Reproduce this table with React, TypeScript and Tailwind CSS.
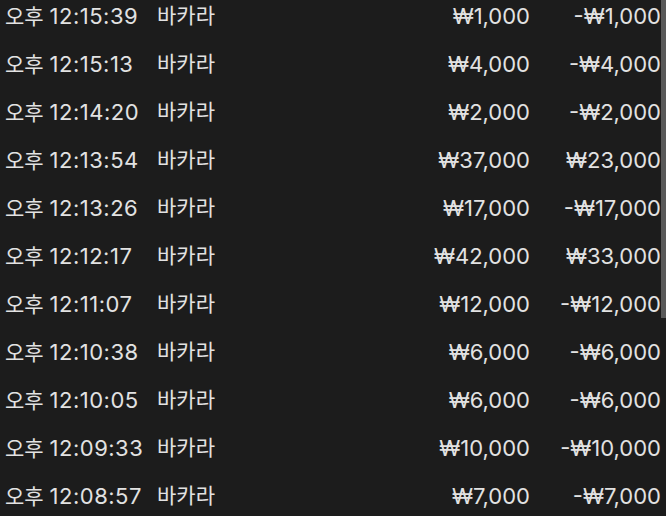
const rows = [
  ["12:15:39", "₩1,000", "-₩1,000"],
  ["12:15:13", "₩4,000", "-₩4,000"],
  ["12:14:20", "₩2,000", "-₩2,000"],
  ["12:13:54", "₩37,000", "₩23,000"],
  ["12:13:26", "₩17,000", "-₩17,000"],
  ["12:12:17", "₩42,000", "₩33,000"],
  ["12:11:07", "₩12,000", "-₩12,000"],
  ["12:10:38", "₩6,000", "-₩6,000"],
  ["12:10:05", "₩6,000", "-₩6,000"],
  ["12:09:33", "₩10,000", "-₩10,000"],
  ["12:08:57", "₩7,000", "-₩7,000"],
];

const App = () => {
  return (
    <div
      className="relative w-[666px] h-[516px] overflow-hidden bg-[#1c1c1c] text-[#e2e2e2] text-[21px]"
      style={{ fontFamily: "Inter, 'Noto Sans CJK KR', sans-serif" }}
    >
      <ul className="-mt-2 pr-[5px]">
        {rows.map(([time, amount, result], i) => (
          <li key={i} className="flex h-12 items-center pl-[5px]">
            <span className="w-[152px]">
              오후 <span className="text-[22px] tracking-[0.5px]">{time}</span>
            </span>
            <span>바카라</span>
            <span className="ml-auto text-[22px]">{amount}</span>
            <span className="w-[131px] text-right text-[22px]">{result}</span>
          </li>
        ))}
      </ul>
      <div className="absolute right-0 top-0 w-[5px] h-[318px] bg-[#595959]" />
    </div>
  );
};

export default App;
